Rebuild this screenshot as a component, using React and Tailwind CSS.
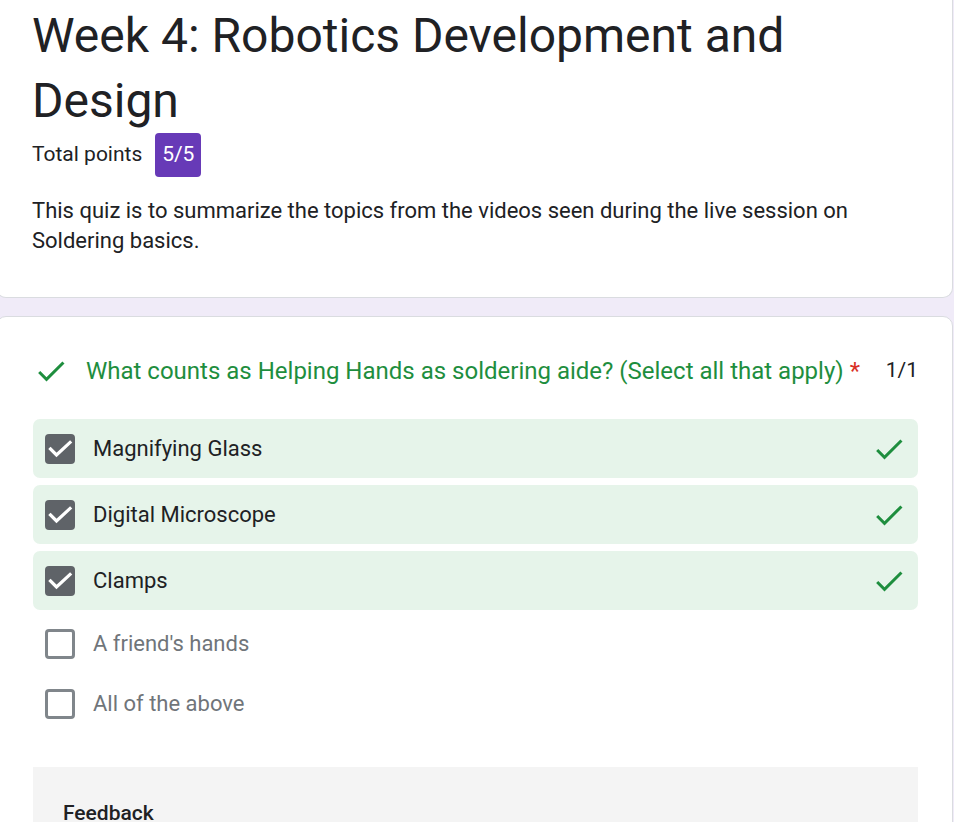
import React from "react";

const CheckIcon = ({ className }) => (
  <svg viewBox="0 0 24 24" className={className} fill="currentColor">
    <path d="M9 16.17L4.83 12l-1.42 1.41L9 19 21 7l-1.41-1.41z" />
  </svg>
);

const options = [
  { label: "Magnifying Glass", checked: true },
  { label: "Digital Microscope", checked: true },
  { label: "Clamps", checked: true },
  { label: "A friend's hands", checked: false },
  { label: "All of the above", checked: false },
];

export default function App() {
  return (
    <div
      className="min-h-[822px] bg-[#f0ebf8] overflow-hidden"
      style={{ fontFamily: "Roboto, 'Noto Sans', Arial, sans-serif" }}
    >
      <div className="ml-[-4px] mr-[1px] bg-white border border-t-0 border-[#dadce0] rounded-b-[10px] pl-[35px] pr-[30px] pt-[3px] pb-[41px]">
        <h1 className="text-[48px] leading-[65px] text-[#202124] font-normal">
          Week 4: Robotics Development and Design
        </h1>
        <div className="flex items-center h-[44px]">
          <span className="text-[21px] text-[#202124]">Total points</span>
          <span className="ml-[13px] h-[44px] w-[46px] flex items-center justify-center bg-[#673ab7] text-white text-[21px] rounded-[4px]">
            5/5
          </span>
        </div>
        <p className="mt-[19px] text-[22px] leading-[30px] text-[#202124] max-w-[860px]">
          This quiz is to summarize the topics from the videos seen during the live session on Soldering basics.
        </p>
      </div>

      <div className="mt-[18px] ml-[-4px] mr-[1px] bg-white border border-[#dadce0] rounded-t-[10px] pl-[36px] pr-[34px] pt-[34px]">
        <div className="flex items-center h-[40px]">
          <CheckIcon className="w-[36px] h-[36px] text-[#1e8e3e] shrink-0" />
          <div className="ml-[17px] flex-1 text-[24px] text-[#1e8e3e] whitespace-nowrap">
            What counts as Helping Hands as soldering aide? (Select all that apply)
            <span className="text-[#d93025] ml-[6px]">*</span>
          </div>
          <span className="text-[21px] text-[#202124]">1/1</span>
        </div>

        <div className="mt-[28px] flex flex-col gap-[7px]">
          {options.map((o) =>
            o.checked ? (
              <div
                key={o.label}
                className="h-[59px] bg-[#e6f4ea] rounded-[7px] flex items-center pl-[12px] pr-[11px]"
              >
                <div className="w-[30px] h-[30px] rounded-[4px] bg-[#5f6368] shrink-0">
                  <svg viewBox="0 0 30 30" className="w-[30px] h-[30px]" fill="none">
                    <polyline
                      points="5.5,15 11.5,21 25,8.5"
                      stroke="white"
                      strokeWidth="3.2"
                      strokeLinecap="square"
                      strokeLinejoin="miter"
                    />
                  </svg>
                </div>
                <span className="ml-[18px] flex-1 text-[22px] text-[#202124]">{o.label}</span>
                <CheckIcon className="w-[36px] h-[36px] text-[#1e8e3e]" />
              </div>
            ) : (
              <div key={o.label} className="h-[53px] flex items-center pl-[12px]">
                <div className="w-[30px] h-[30px] rounded-[4px] border-[3px] border-[#80868b] shrink-0" />
                <span className="ml-[18px] text-[22px] text-[#70757a]">{o.label}</span>
              </div>
            )
          )}
        </div>

        <div className="mt-[37px] bg-[#f4f4f4] pl-[30px] pt-[31px] pb-[40px]">
          <div className="text-[21px] font-medium text-[#202124]">Feedback</div>
        </div>
      </div>
    </div>
  );
}
